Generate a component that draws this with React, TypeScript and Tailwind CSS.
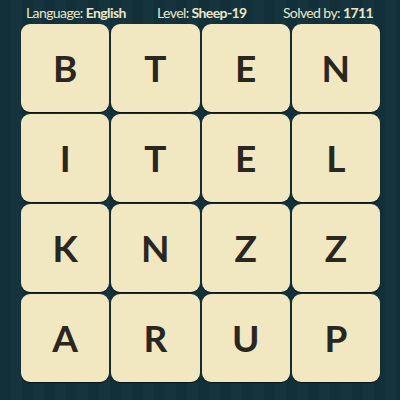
const letters = ['B', 'T', 'E', 'N', 'I', 'T', 'E', 'L', 'K', 'N', 'Z', 'Z', 'A', 'R', 'U', 'P']

export default function App() {
  return (
    <div
      className="w-[400px] h-[400px] overflow-hidden bg-[repeating-linear-gradient(90deg,#12303a_0px,#12303a_11px,#15343e_11px,#15343e_22px)] text-[#ece6c6]"
      style={{ fontFamily: 'Lato, "Open Sans", sans-serif' }}
    >
      {/* Header */}
      <div className="h-[24px] flex items-center text-[14px] tracking-[-0.6px] leading-none pl-[26px] pr-[27px] pt-[1px]">
        <div className="w-[131px]">
          Language: <span className="font-bold">English</span>
        </div>
        <div className="flex-1">
          Level: <span className="font-bold">Sheep-19</span>
        </div>
        <div>
          Solved by: <span className="font-bold">1711</span>
        </div>
      </div>

      {/* Board */}
      <div className="ml-[21px] w-[359px] grid grid-cols-4 gap-x-[2px] gap-y-[2px]">
        {letters.map((l, i) => (
          <div
            key={i}
            className="h-[88px] rounded-[9px] bg-[#f1e8c2] shadow-[0_1px_1px_rgba(0,0,0,0.6)] flex items-center justify-center text-[37px] font-bold text-[#2a2620]"
          >
            {l}
          </div>
        ))}
      </div>
    </div>
  )
}
